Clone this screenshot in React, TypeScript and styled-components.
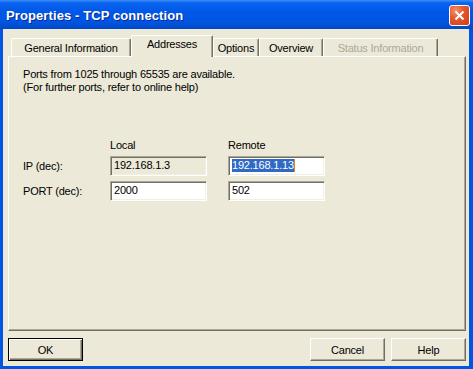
import React from 'react';
import styled, { createGlobalStyle } from 'styled-components';

const GlobalStyle = createGlobalStyle`
  html, body {
    margin: 0;
    padding: 0;
    background: #ece9d8;
  }
  body {
    font-family: 'Liberation Sans', Arial, sans-serif;
    font-size: 11px;
    letter-spacing: -0.2px;
    color: #000;
  }
`;

const Window = styled.div`
  width: 473px;
  height: 369px;
  display: flex;
  flex-direction: column;
  box-sizing: border-box;
  background: #0055e5;
  overflow: hidden;
`;

const TitleBar = styled.div`
  height: 29px;
  flex: none;
  display: flex;
  align-items: center;
  justify-content: space-between;
  padding: 0 3px 0 6px;
  background: linear-gradient(
    to bottom,
    #3c8ef7 0%,
    #0a62f0 10%,
    #0058e8 40%,
    #0055e2 75%,
    #0049c8 100%
  );
`;

const Title = styled.span`
  color: #fff;
  font-family: 'Liberation Sans', Arial, sans-serif;
  font-weight: bold;
  font-size: 13px;
  letter-spacing: 0.1px;
  text-shadow: 1px 1px 0 #0a2a8a;
  margin-top: 1px;
`;

const CloseButton = styled.div`
  width: 19px;
  height: 19px;
  margin-top: 1px;
  border: 1px solid #fff;
  border-radius: 3px;
  background: radial-gradient(circle at 30% 25%, #f49070 0%, #e5572c 40%, #cc3f14 100%);
  display: flex;
  align-items: center;
  justify-content: center;
`;

const Body = styled.div`
  flex: 1;
  display: flex;
  flex-direction: column;
  background: #ece9d8;
  margin: 0 4px 3px 3px;
  padding: 6px 3px 5px 5px;
`;

const TabStrip = styled.div`
  height: 21px;
  display: flex;
  align-items: flex-end;
  padding-left: 3px;
  position: relative;
  z-index: 1;
`;

const Tab = styled.div<{ $width: number; $active?: boolean; $disabled?: boolean }>`
  width: ${p => p.$width}px;
  height: ${p => (p.$active ? 22 : 18)}px;
  margin-bottom: ${p => (p.$active ? -1 : 0)}px;
  box-sizing: border-box;
  background: #ece9d8;
  border-top: 1px solid #fff;
  border-left: 1px solid #fff;
  border-right: 1px solid #716f64;
  box-shadow: inset -1px 0 0 #aca899;
  border-radius: 2px 2px 0 0;
  display: flex;
  justify-content: center;
  align-items: flex-start;
  padding-top: ${p => (p.$active ? 2 : 3)}px;
  color: ${p => (p.$disabled ? '#aca899' : '#000')};
`;

const Panel = styled.div`
  height: 275px;
  box-sizing: border-box;
  border-top: 1px solid #fff;
  border-left: 1px solid #fff;
  border-right: 1px solid #716f64;
  border-bottom: 1px solid #716f64;
  box-shadow: inset -1px -1px 0 #aca899;
  padding: 11px 14px 0 14px;
`;

const Note = styled.p`
  margin: 0;
  line-height: 13px;
`;

const FieldGrid = styled.div`
  margin-top: 45px;
  display: grid;
  grid-template-columns: 66px 97px 97px;
  column-gap: 21px;
  row-gap: 5px;
  align-items: center;
`;

const Caption = styled.div`
  line-height: 13px;
  margin-bottom: -1px;
`;

const Label = styled.div`
  line-height: 13px;
  white-space: nowrap;
`;

const Field = styled.div<{ $readOnly?: boolean }>`
  height: 20px;
  box-sizing: border-box;
  border: 1px solid;
  border-color: #aca899 #fff #fff #aca899;
  box-shadow: inset 1px 1px 0 #716f64, inset -1px -1px 0 #f1efe2;
  background: ${p => (p.$readOnly ? '#ece9d8' : '#fff')};
  padding: 2px 0 0 3px;
  line-height: 13px;
  white-space: nowrap;
  display: flex;
  align-items: flex-start;
`;

const Selected = styled.span`
  background: #316ac5;
  color: #fff;
`;

const Caret = styled.span`
  display: inline-block;
  width: 1px;
  height: 13px;
  background: #d08a2a;
`;

const Footer = styled.div`
  display: flex;
  gap: 6px;
  margin-top: 7px;
`;

const Spacer = styled.div`
  flex: 1;
`;

const Button = styled.div<{ $default?: boolean }>`
  width: 75px;
  height: 23px;
  box-sizing: border-box;
  display: flex;
  align-items: center;
  justify-content: center;
  background: #ece9d8;
  border: 1px solid;
  border-color: ${p => (p.$default ? '#000' : '#fff #716f64 #716f64 #fff')};
  box-shadow: ${p =>
    p.$default
      ? 'inset 1px 1px 0 #fff, inset -1px -1px 0 #716f64, inset -2px -2px 0 #aca899'
      : 'inset -1px -1px 0 #aca899'};
`;

const App: React.FC = () => {
  return (
    <>
      <GlobalStyle />
      <Window>
        <TitleBar>
          <Title>Properties - TCP connection</Title>
          <CloseButton>
            <svg width="11" height="11" viewBox="0 0 11 11">
              <path d="M1.5 1.5 L9.5 9.5 M9.5 1.5 L1.5 9.5" stroke="#fff" strokeWidth="2" />
            </svg>
          </CloseButton>
        </TitleBar>
        <Body>
          <TabStrip>
            <Tab $width={120}>General Information</Tab>
            <Tab $width={82} $active>Addresses</Tab>
            <Tab $width={46}>Options</Tab>
            <Tab $width={64}>Overview</Tab>
            <Tab $width={115} $disabled>Status Information</Tab>
          </TabStrip>
          <Panel>
            <Note>Ports from 1025 through 65535 are available.</Note>
            <Note>(For further ports, refer to online help)</Note>
            <FieldGrid>
              <span />
              <Caption>Local</Caption>
              <Caption>Remote</Caption>
              <Label>IP (dec):</Label>
              <Field $readOnly>192.168.1.3</Field>
              <Field>
                <Selected>192.168.1.13</Selected>
                <Caret />
              </Field>
              <Label>PORT (dec):</Label>
              <Field>2000</Field>
              <Field>502</Field>
            </FieldGrid>
          </Panel>
          <Footer>
            <Button $default>OK</Button>
            <Spacer />
            <Button>Cancel</Button>
            <Button>Help</Button>
          </Footer>
        </Body>
      </Window>
    </>
  );
};

export default App;
